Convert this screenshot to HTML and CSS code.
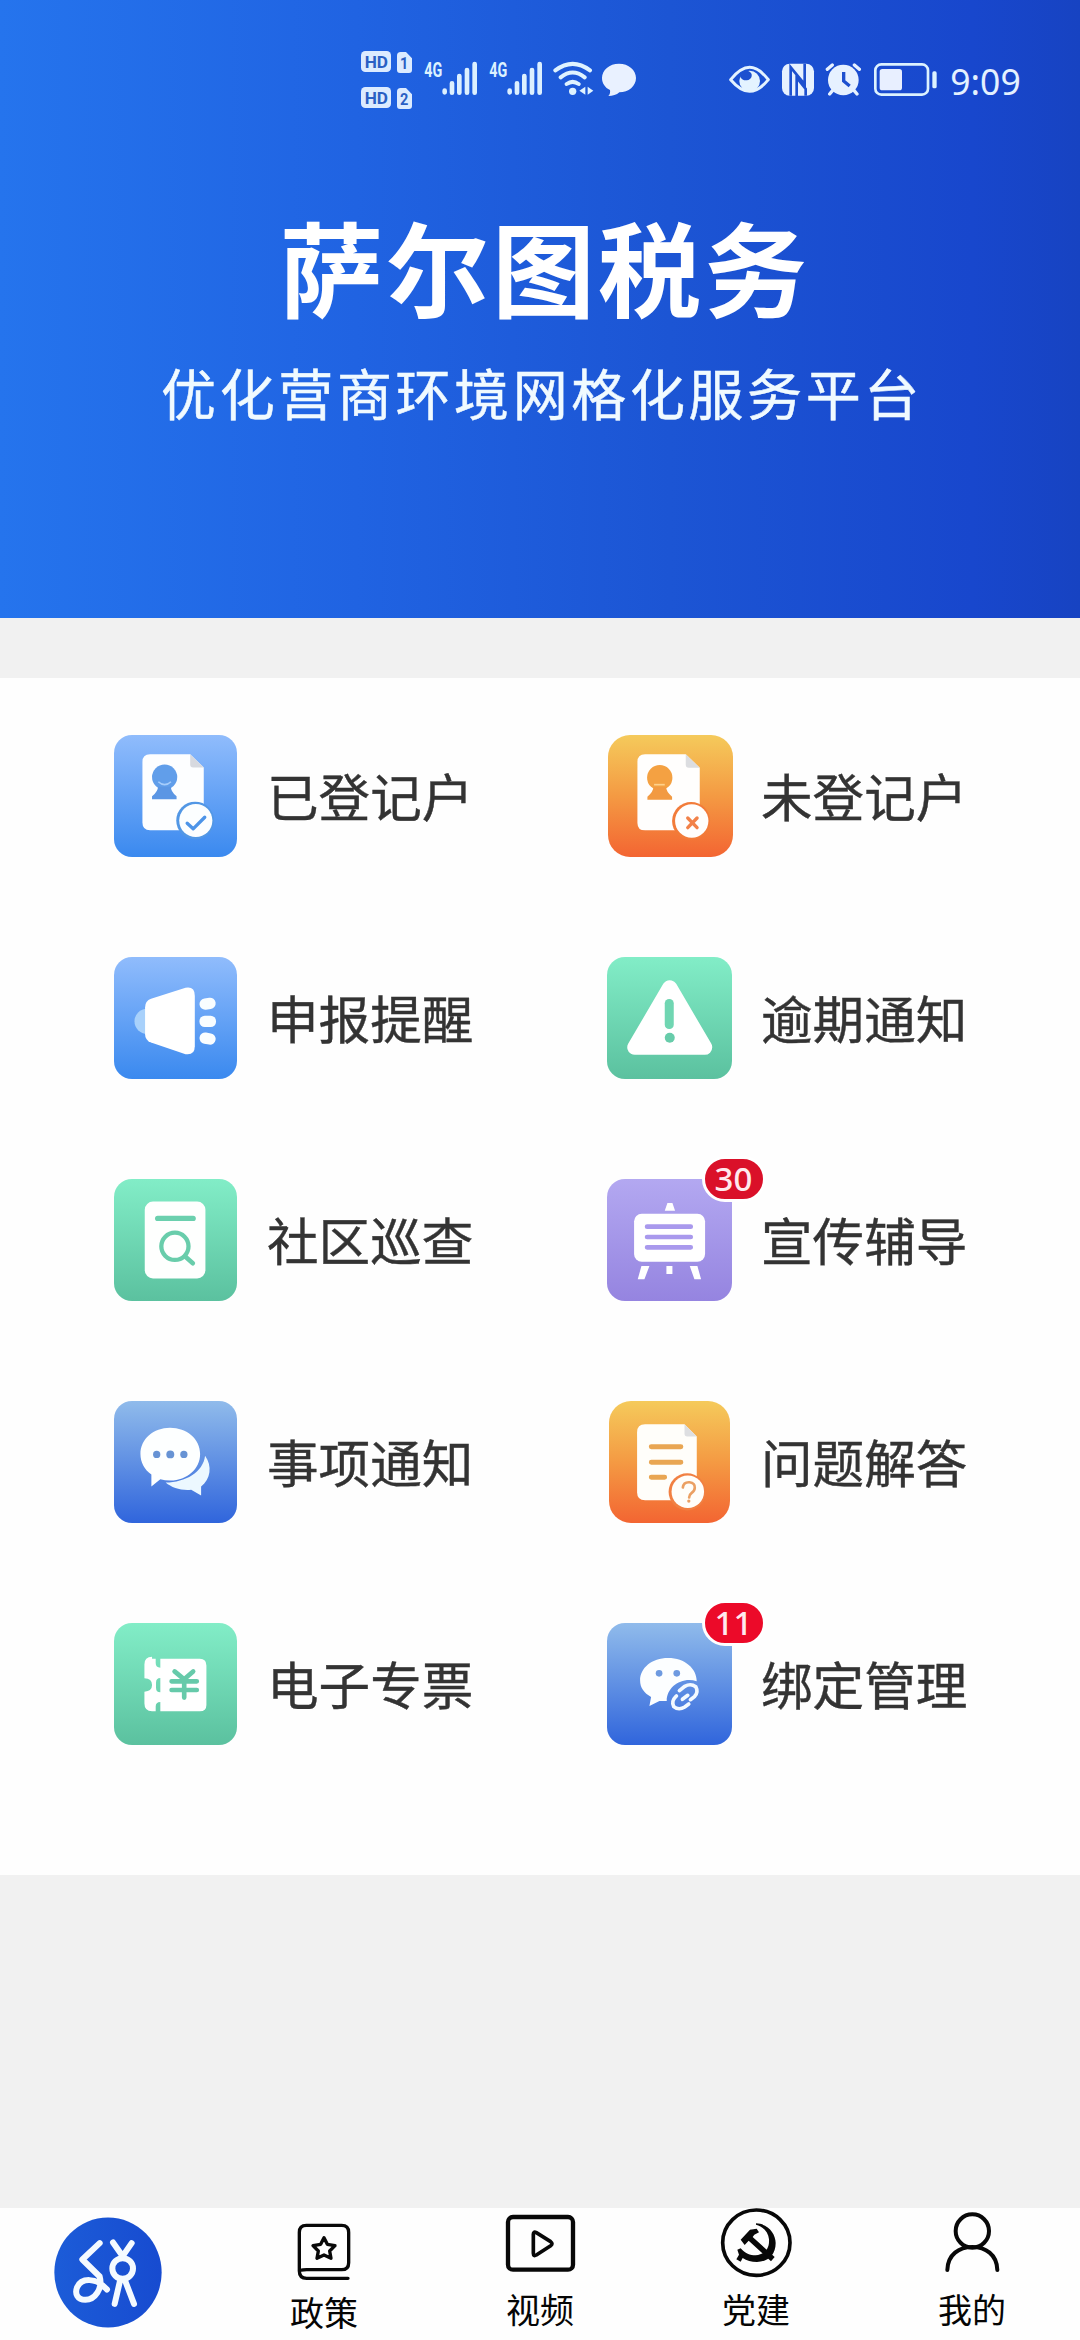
FILE: index.html
```html
<!DOCTYPE html>
<html lang="zh-CN">
<head>
<meta charset="utf-8">
<title>萨尔图税务</title>
<link rel="stylesheet" href="styles.css">
</head>
<body>
<div class="app">
  <header class="hero">
    <div class="status">
      <div class="status-left">
        <svg class="s-hd" viewBox="60 60 162 180">
          <g fill="#dcebff"><rect x="63" y="63" width="90" height="63" rx="13"/><rect x="63" y="171" width="90" height="63" rx="13"/>
          <path d="M182 66h16l18 19v35q0 9-9 9h-27q-9 0-9-9V77q0-11 11-11zM182 174h16l18 19v35q0 9-9 9h-27q-9 0-9-9v-43q0-11 11-11z"/></g>
          <g class="s-text" fill="#2a5fc4"><text x="74" y="115" font-size="52" textLength="70" lengthAdjust="spacingAndGlyphs">HD</text><text x="74" y="223" font-size="52" textLength="70" lengthAdjust="spacingAndGlyphs">HD</text><text x="180" y="117" font-size="48" textLength="25" lengthAdjust="spacingAndGlyphs">1</text><text x="180" y="225" font-size="48" textLength="25" lengthAdjust="spacingAndGlyphs">2</text></g>
        </svg>
        <svg class="s-signal" viewBox="249 72 165 126">
          <text class="s-text" x="253" y="140" font-size="60" textLength="54" lengthAdjust="spacingAndGlyphs" fill="#dcf2ff">4G</text>
          <path d="M314 182v5M336 160v28M358 138v50M381 120v68M404 102v86" stroke="#dcf0ff" stroke-width="14" stroke-linecap="round"/>
        </svg>
        <svg class="s-signal" viewBox="249 72 165 126">
          <text class="s-text" x="253" y="140" font-size="60" textLength="54" lengthAdjust="spacingAndGlyphs" fill="#dcf2ff">4G</text>
          <path d="M314 182v5M336 160v28M358 138v50M381 120v68M404 102v86" stroke="#dcf0ff" stroke-width="14" stroke-linecap="round"/>
        </svg>
        <svg class="s-wifi" viewBox="636 90 126 108">
          <g fill="none" stroke="#dff3ff" stroke-width="12" stroke-linecap="round"><path d="M643 121Q695 82 747 121M659 142Q695 113 731 142M677 162Q695 149 713 162"/></g>
          <circle cx="695" cy="184" r="11" fill="#dff3ff"/><path d="M733 170v24l-18-12zM740 170v24l17-12z" fill="#dff3ff"/>
        </svg>
        <svg class="s-bubble" viewBox="780 96 108 105"><path d="M834 101c29 0 51 19 51 43s-22 43-50 43c-8 8-20 11-33 11 5-5 6-11 5-18-15-7-24-20-24-36 0-24 22-43 51-43z" fill="#e9f1ff"/></svg>
      </div>
      <div class="status-right">
        <svg class="s-eye" viewBox="84 102 129 90"><path d="M92 149Q122 112 149 112T205 149Q176 184 149 184T92 149z" fill="none" stroke="#e4f3ff" stroke-width="9" stroke-linejoin="round"/><circle cx="149" cy="153" r="31" fill="#e4f3ff"/><path d="M120 140q8-20 25-17 12 5 10 16-3 11-15 12-13 1-20-11z" fill="#1d50cf"/></svg>
        <svg class="s-nfc" viewBox="243 96 102 105"><rect x="246" y="101" width="96" height="96" rx="23" fill="#e6f1ff"/><path d="M272 197V112L314 163V101M290 198V143L317 177V197" fill="none" stroke="#1d50cf" stroke-width="8"/></svg>
        <svg class="s-alarm" viewBox="375 96 111 105"><circle cx="430" cy="150" r="46" fill="#e6f1ff"/><path d="M382 118l15-13M478 118l-15-13M398 181l-9 11M462 181l9 11" stroke="#e6f1ff" stroke-width="10" stroke-linecap="round"/><path d="M431 126v27l18 15" fill="none" stroke="#1d50cf" stroke-width="10"/></svg>
        <svg class="s-battery" viewBox="519 96 198 105"><rect x="526" y="103" width="158" height="91" rx="18" fill="none" stroke="#dcf2ff" stroke-width="8"/><rect x="539" y="117" width="67" height="64" rx="8" fill="#e8efff"/><rect x="697" y="124" width="13" height="51" rx="5" fill="#dcf2ff"/></svg>
        <span class="time">9:09</span>
      </div>
    </div>
    <h1>萨尔图税务</h1>
    <p class="subtitle">优化营商环境网格化服务平台</p>
  </header>

  <main class="menu">
    <a class="item"><div class="tile sky">
      <svg viewBox="42 76 368 368"><path d="M150 134h121l41 40v188q0 1-1 1H150q-23 0-23-23V157q0-23 23-23z" fill="#fdfeff"/><path d="M271 134l41 40h-32q-9 0-9-9z" fill="#d7d9df"/><circle cx="194" cy="203" r="38" fill="#619eea"/><path d="M174 232h39q-1 14 17 29v9h-74v-9q18-15 18-29z" fill="#5b96e4"/><path d="M175 217q19 18 38 0" fill="none" stroke="#a6cdfb" stroke-width="5"/><circle cx="286" cy="334" r="57" fill="#5297e5"/><circle cx="288" cy="334" r="50" fill="#fcfeff"/><path d="M262 342l18 17 35-35" fill="none" stroke="#4d94e8" stroke-width="10" stroke-linecap="round" stroke-linejoin="round"/></svg>
    </div><span class="label">已登记户</span></a>
    <a class="item"><div class="tile orange wide shift">
      <svg viewBox="52 76 376 366"><path d="M163 134h122l42 40v188H163q-23 0-23-23V157q0-23 23-23z" fill="#fffefd"/><path d="M285 134l42 40h-33q-9 0-9-9z" fill="#dcdde0"/><circle cx="207" cy="204" r="38" fill="#f4a142"/><path d="M188 232h38q0 14 18 29v9h-74v-9q18-15 18-29z" fill="#f29a42"/><path d="M190 225h32" stroke="#ffd18b" stroke-width="5"/><circle cx="301" cy="334" r="57" fill="#f27b39"/><circle cx="303" cy="334" r="50" fill="#fffefd"/><path d="M291 325l28 29M319 325l-28 29" stroke="#f28148" stroke-width="10" stroke-linecap="round"/></svg>
    </div><span class="label">未登记户</span></a>

    <a class="item"><div class="tile sky">
      <svg viewBox="42 741 368 368"><circle cx="141" cy="935" r="38" fill="#a8d1fb"/><path d="M153 867l104-33q28-5 28 24v152q0 28-28 24l-104-35q-18-7-18-25v-81q0-20 18-26z" fill="#fff"/><g fill="#f9fdff"><rect x="299" y="865" width="49" height="34" rx="17" transform="rotate(-8 323 882)"/><rect x="299" y="918" width="50" height="34" rx="16"/><rect x="299" y="970" width="49" height="34" rx="17" transform="rotate(10 323 987)"/></g></svg>
    </div><span class="label">申报提醒</span></a>
    <a class="item"><div class="tile green wide">
      <svg viewBox="48 741 376 366"><path d="M236 833L131 1012H341z" fill="#fff" stroke="#fff" stroke-width="45" stroke-linejoin="round"/><rect x="221" y="867" width="27" height="90" rx="13" fill="#70d6b2"/><circle cx="236" cy="983" r="15" fill="#67ccaa"/></svg>
    </div><span class="label">逾期通知</span></a>

    <a class="item"><div class="tile green">
      <svg viewBox="42 87 368 368"><rect x="134" y="155" width="183" height="232" rx="25" fill="#fefffe"/><path d="M173 206h107" stroke="#6bd0ae" stroke-width="16" stroke-linecap="round"/><circle cx="225" cy="290" r="41" fill="none" stroke="#69cdab" stroke-width="13"/><path d="M256 321l23 20" stroke="#69cdab" stroke-width="14" stroke-linecap="round"/></svg>
    </div><span class="label">社区巡查</span></a>
    <a class="item"><div class="tile purple wide">
      <svg viewBox="48 87 376 366"><path d="M229 159h15l8 23h-31zM151 348h24l-15 40h-20zM296 348h23l11 40h-20zM226 348h18v24h-18z" fill="#fff"/><rect x="129" y="191" width="213" height="144" rx="23" fill="#fff"/><path d="M168 230h131M168 261h131M168 292h131" stroke="#a999ed" stroke-width="14" stroke-linecap="round"/></svg>
      <span class="badge">30</span>
    </div><span class="label">宣传辅导</span></a>

    <a class="item"><div class="tile royal">
      <svg viewBox="42 753 368 368"><path d="M316 918c22 31 17 70-12 93v27l-30-17c-30 3-58-6-77-22 60-1 113-31 119-81z" fill="#ecf8ff"/><path d="M210 834c51 0 91 34 91 79s-40 80-89 80q-18 0-31-4l-27 22v-36c-21-15-33-37-33-62 0-45 40-79 89-79z" fill="#fdffff"/><g fill="#6793d4"><circle cx="170" cy="914" r="11"/><circle cx="211" cy="914" r="12"/><circle cx="252" cy="914" r="11"/></g></svg>
    </div><span class="label">事项通知</span></a>
    <a class="item"><div class="tile orange inset">
      <svg viewBox="57 753 362 368"><path d="M165 823h119l37 37v192H165q-24 0-24-24V847q0-24 24-24z" fill="#fffefa"/><path d="M284 823l37 37h-29q-8 0-8-9z" fill="#dedfe1"/><path d="M184 891h89M184 938h89M184 983h40" stroke="#e9a653" stroke-width="15" stroke-linecap="round"/><circle cx="292" cy="1027" r="56" fill="#f18042"/><circle cx="294" cy="1027" r="49" fill="#fffefa"/><path d="M279 1014q2-17 20-16 17 2 16 17 0 9-10 16-7 5-7 13" fill="none" stroke="#eba063" stroke-width="8" stroke-linecap="round"/><circle cx="297" cy="1055" r="5" fill="#eba063"/></svg>
    </div><span class="label">问题解答</span></a>

    <a class="item"><div class="tile green">
      <svg viewBox="42 98 368 368"><path d="M156 206h11v13q0 14 14 14V206h119q20 0 20 20v119q0 19-20 19H181v-28q-14 0-14 14v14h-11q-23 0-23-23v-36q23-1 23-20t-23-20v-42q0-23 23-23zM181 264q-13 0-13 14v15q0 14 13 14z" fill="#fff" fill-rule="evenodd"/><path d="M224 244l29 24 27-24M215 274h76M215 300h76M253 268v55" fill="none" stroke="#66caaa" stroke-width="14" stroke-linecap="round" stroke-linejoin="round"/></svg>
    </div><span class="label">电子专票</span></a>
    <a class="item"><div class="tile royal wide">
      <svg viewBox="48 98 376 366"><path d="M231 203c51 0 86 32 86 70-44-15-91 17-90 59h-22l-30 15 5-27c-22-12-33-28-33-50 0-37 35-67 84-67z" fill="#fcfeff"/><circle cx="204" cy="249" r="10" fill="#6e9ae0"/><circle cx="257" cy="249" r="10" fill="#6e9ae0"/><g fill="none" stroke="#f3f9ff" stroke-width="11" stroke-linecap="round"><path d="M265 301l16-13q18-10 33 1 9 17-4 30l-12 9M293 341l-12 9q-18 11-33-1-8-16 5-29l3-3"/><path d="M274 327l16-12"/></g></svg>
      <span class="badge bright">11</span>
    </div><span class="label">绑定管理</span></a>
  </main>

  <nav class="tabs">
    <a class="tab home"><svg class="t-logo" viewBox="162 80 324 332"><defs><linearGradient id="lg"><stop offset="0" stop-color="#1c5cd8"/><stop offset="1" stop-color="#174bd0"/></linearGradient></defs><ellipse cx="324" cy="246" rx="161" ry="165" fill="url(#lg)"/><g fill="none" stroke="#f4faff" stroke-width="18" stroke-linecap="round" stroke-linejoin="round"><path d="M299 158L247 207L299 258C309 294 285 328 256 328C232 328 224 309 231 291C244 261 289 260 321 297"/><path d="M339 156L368 197L395 158"/><circle cx="368" cy="234" r="31"/><path d="M361 267L344 340M374 267L402 340"/></g></svg></a>
    <a class="tab"><svg class="t-book" viewBox="891 98 162 174"><g fill="none" stroke="#080808" stroke-width="10" stroke-linecap="round" stroke-linejoin="round"><path d="M898 242V126q0-21 21-21h106q21 0 21 21v91q0 21-21 21H920q-22 0-22 4 0 22 22 22h124"/><path d="M972 142l10 20 23 4-16 16 4 22-21-10-21 10 4-22-16-16 23-4z"/></g></svg><span>政策</span></a>
    <a class="tab"><svg class="t-video" viewBox="192 71 213 177"><g fill="none" stroke="#080808" stroke-linejoin="round"><rect x="201" y="80" width="195" height="158" rx="15" stroke-width="13"/><path d="M277 132q0-10 9-5l43 27q8 6 0 12l-43 28q-9 5-9-5z" stroke-width="11"/></g></svg><span>视频</span></a>
    <a class="tab"><svg class="t-party" viewBox="840 53 219 210"><ellipse cx="949" cy="157" rx="101" ry="98" fill="none" stroke="#080808" stroke-width="11"/><g fill="#080808"><path d="M948 99C984 100 1007 130 1007 158C1007 196 981 215 951 215C934 215 920 211 908 203L902 214L889 207L897 193L892 178L902 174C915 190 930 195 947 195C973 193 989 175 987 147C985 126 971 110 948 103z"/><path d="M902 148L930 118L950 115L957 126L943 133L938 140L1004 200L993 213L926 151L914 164z"/></g></svg><span>党建</span></a>
    <a class="tab"><svg class="t-me" viewBox="310 65 168 183"><g fill="none" stroke="#080808" stroke-width="12" stroke-linecap="round"><circle cx="395" cy="122" r="50"/><path d="M320 239C321 192 356 170 395 170S469 192 470 239"/></g></svg><span>我的</span></a>
  </nav>
</div>
</body>
</html>
```
FILE: styles.css
```css
* { box-sizing: border-box; }
body { margin: 0; font-family: "Noto Sans CJK SC", "Noto Sans", sans-serif; }
svg { display: block; }

.app {
  width: 1080px;
  height: 2340px;
  display: flex;
  flex-direction: column;
  background: #f1f1f1;
}

/* Header */
.hero {
  height: 618px;
  flex: none;
  background: linear-gradient(90deg, #2574ed 0%, #2063e2 33%, #1c55d4 62%, #1847cd 90%, #1743c2 100%);
  color: #fff;
  text-align: center;
}
.status {
  height: 108px;
  padding: 50px 59px 0 360px;
  display: flex;
  justify-content: space-between;
}
.status-left, .status-right { display: flex; }
.status-left { align-items: flex-start; }
.s-text { font-family: "Roboto", sans-serif; font-weight: 700; }
.s-hd { width: 54px; height: 60px; }
.s-signal { width: 55px; height: 42px; margin: 4px 0 0 9px; overflow: visible; }
.s-signal + .s-signal { margin-left: 10px; }
.s-wifi { width: 42px; height: 36px; margin: 10px 0 0 10px; }
.s-bubble { width: 36px; height: 35px; margin: 12px 0 0 6px; }
.s-eye { width: 43px; height: 30px; margin-top: 14px; }
.s-nfc { width: 34px; height: 35px; margin: 12px 0 0 10px; }
.s-alarm { width: 37px; height: 35px; margin: 12px 0 0 10px; }
.s-battery { width: 66px; height: 35px; margin: 12px 0 0 11px; }
.time {
  width: 71px;
  margin: 6px 0 0 11px;
  font: 35.5px/50px "Noto Sans", sans-serif;
  color: #e4f1ff;
  white-space: nowrap;
}
.hero h1 {
  margin: 88px 0 0;
  padding-left: 10px;
  font-size: 103px;
  font-weight: 700;
  line-height: 140px;
  letter-spacing: 3px;
}
.subtitle {
  margin: 17px 0 0;
  padding-left: 4px;
  font-size: 55px;
  line-height: 76px;
  letter-spacing: 3.6px;
  color: #f0faff;
  -webkit-text-stroke: 0.5px #f0faff;
}

/* Service menu */
.menu {
  height: 1197px;
  flex: none;
  margin-top: 60px;
  padding: 57px 0 0 114px;
  display: grid;
  grid-template-columns: 492.5px 1fr;
  grid-auto-rows: 222px;
  align-content: start;
  background: #fefefe;
}
.item { display: flex; align-items: flex-start; }
.tile {
  position: relative;
  width: 122.5px;
  height: 122px;
  margin-right: 30.5px;
  flex: none;
  border-radius: 18px;
}
.tile > svg { width: 100%; height: 100%; }
.tile.wide { width: 125.5px; margin-right: 29px; }
.tile.shift { margin-left: 1px; margin-right: 28px; }
.tile.inset { width: 120.5px; margin-left: 2.5px; margin-right: 31.5px; }
.sky { background: linear-gradient(#90bcfc, #3a89ef); }
.orange { background: linear-gradient(#f5ca5b, #f49a43 50%, #f36532); border-radius: 22px; }
.green { background: linear-gradient(#82edc7, #5bc19f); }
.purple { background: linear-gradient(#b3a8f1, #9584e0); }
.royal { background: linear-gradient(#90bbeb, #3065dc); }
.label {
  font-size: 51.6px;
  line-height: 76px;
  margin-top: 22px;
  color: #333;
  -webkit-text-stroke: 0.4px #333;
  white-space: nowrap;
}
.badge {
  position: absolute;
  left: 95px;
  top: -23px;
  width: 64px;
  height: 46px;
  border: 3px solid #fff;
  border-radius: 23px;
  background: #da1029;
  color: #ffe9ee;
  font: 500 33px/40px "Noto Sans", sans-serif;
  text-align: center;
}
.badge.bright { background: #ec0a29; }

/* Bottom navigation */
.tabs {
  height: 132px;
  margin-top: auto;
  display: grid;
  grid-template-columns: repeat(5, 1fr);
  background: #fefefe;
}
.tab {
  display: flex;
  flex-direction: column;
  justify-content: flex-end;
  align-items: center;
  padding-bottom: 6px;
  font-size: 34px;
  line-height: 50px;
  color: #050505;
}
.tab.home { justify-content: flex-start; padding: 9px 0 0; }
.t-logo { width: 108px; height: 111px; }
.t-book { width: 54px; height: 58px; margin-bottom: 6px; }
.t-book + span { margin-bottom: -3px; }
.t-video { width: 71px; height: 59px; margin-bottom: 11px; }
.t-party { width: 73px; height: 70px; margin-bottom: 6px; }
.t-me { width: 56px; height: 61px; margin-bottom: 11px; }
```
